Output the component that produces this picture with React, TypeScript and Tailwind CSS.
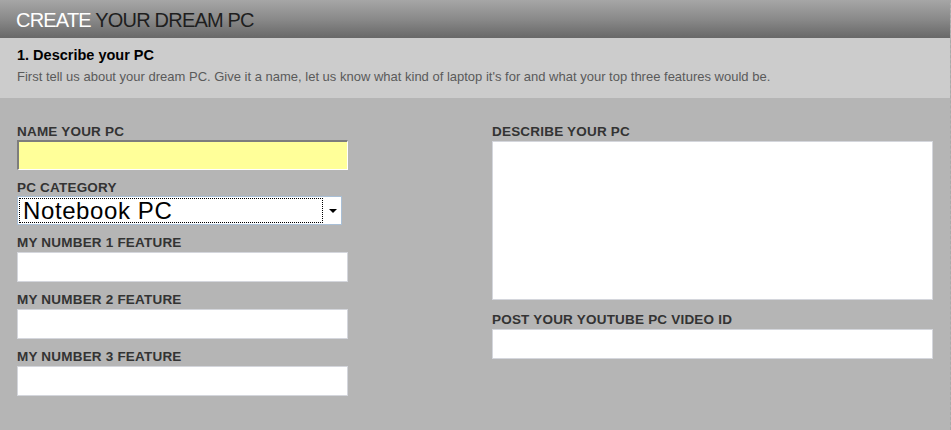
import React from 'react';

const labelCls = 'block text-[13.5px] leading-[14px] tracking-[0.2px] font-bold text-[#333333] uppercase';

const TextBox: React.FC<{ className?: string }> = ({ className }) => (
  <div className={'bg-white border border-[#d4d6dc] ' + (className ?? '')} />
);

const Field: React.FC<{ label: string; children: React.ReactNode; className?: string }> = ({ label, children, className }) => (
  <div className={className}>
    <span className={labelCls}>{label}</span>
    {children}
  </div>
);

export default function App() {
  return (
    <div className="w-[951px] h-[430px] bg-[#b5b5b5] font-['Liberation_Sans',Arial,sans-serif] border-r border-dashed border-[#a9a9a9] overflow-hidden">
      <div className="h-[38px] bg-gradient-to-b from-[#a6a6a6] via-[#8a8a8a] to-[#686868] pl-[16px] flex items-center">
        <h1 className="text-[20px] leading-none font-light pt-[1px] tracking-[-0.8px]">
          <span className="text-white">CREATE</span>{' '}
          <span className="text-[#1e1e1e]">YOUR DREAM PC</span>
        </h1>
      </div>

      <div className="h-[60px] bg-[#cccccc] pl-[17px] pt-[8px]">
        <h2 className="text-[14.5px] leading-[18px] font-bold text-black">1. Describe your PC</h2>
        <p className="text-[13px] leading-[14px] mt-[6px] text-[#5a5a5a]">
          First tell us about your dream PC. Give it a name, let us know what kind of laptop it's for and what your top three features would be.
        </p>
      </div>

      <div className="flex pl-[17px] pt-[27px]">
        <div className="w-[331px] flex flex-col gap-[11px]">
          <Field label="Name your PC">
            <div className="mt-[1px] h-[30px] bg-[#ffff99] border-t-2 border-l-2 border-b border-r border-t-[#7d7d7d] border-l-[#7d7d7d] border-b-white border-r-white" />
          </Field>
          <Field label="PC Category">
            <div className="mt-[1px] w-[325px] h-[29px] bg-white border border-[#a9bfd6] flex">
              <div className="flex-1 m-[1px] border border-dotted border-black flex items-center pl-[3px]">
                <span className="text-[24px] leading-none tracking-[0.6px] text-black pt-[1px]">Notebook PC</span>
              </div>
              <div className="w-[17px] flex items-center justify-center">
                <div className="w-0 h-0 border-l-[4px] border-r-[4px] border-t-[4px] border-l-transparent border-r-transparent border-t-black" />
              </div>
            </div>
          </Field>
          <Field label="My number 1 feature">
            <TextBox className="mt-[2px] h-[30px]" />
          </Field>
          <Field label="My number 2 feature">
            <TextBox className="mt-[2px] h-[30px]" />
          </Field>
          <Field label="My number 3 feature">
            <TextBox className="mt-[2px] h-[30px]" />
          </Field>
        </div>

        <div className="ml-[144px] w-[441px] flex flex-col gap-[13px]">
          <Field label="Describe your PC">
            <TextBox className="mt-[2px] h-[159px]" />
          </Field>
          <Field label="Post your YouTube PC video ID">
            <TextBox className="mt-[2px] h-[30px]" />
          </Field>
        </div>
      </div>
    </div>
  );
}
